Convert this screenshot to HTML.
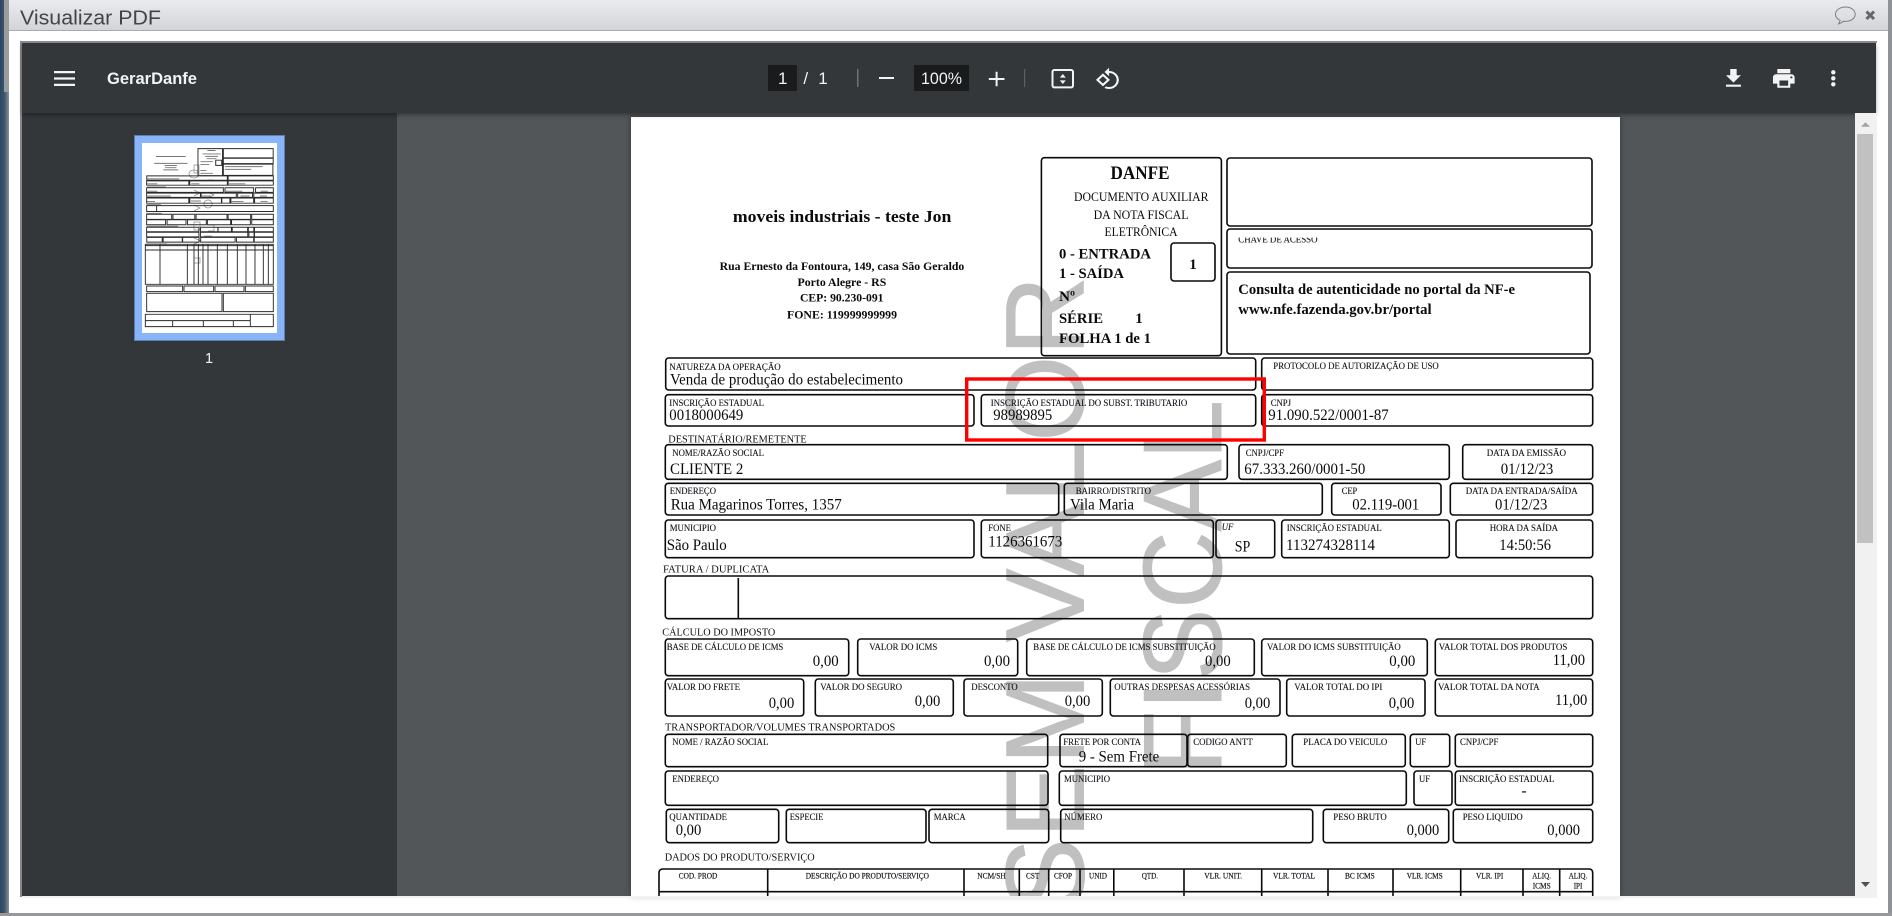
<!DOCTYPE html>
<html lang="pt-BR"><head><meta charset="utf-8"><title>Visualizar PDF</title>
<style>
html,body{margin:0;padding:0;width:1892px;height:916px;overflow:hidden;background:#fff}
.a{position:absolute}
svg{position:absolute;left:0;top:0}
#pg text{font-family:"Liberation Serif",serif;fill:#0a0a0a;white-space:pre}
#pg .l{font-size:9.2px;fill:#14141c;stroke:#14141c;stroke-width:.12px}
#pg .h{font-size:8.4px;fill:#14141c;stroke:#14141c;stroke-width:.2px}
#pg .s{font-size:10.8px;fill:#111}
#pg .v{font-size:16px}
#pg .m{font-size:13px}
#pg .b{font-weight:bold}
#pg .w{font-family:"Liberation Sans",sans-serif;font-size:111px;fill:#c0c0c0;stroke:#c0c0c0;stroke-width:1px}
#pg .box rect{fill:none;stroke:#0a0a0a;stroke-width:1.6px}
.ui{font-family:"Liberation Sans",sans-serif;fill:#f1f3f4}
</style></head>
<body>
<!-- window chrome -->
<div class="a" style="left:0;top:0;width:9px;height:916px;background:linear-gradient(90deg,#2c4763,#3f566e 50%,#8a9199)"></div>
<div class="a" style="left:4px;top:0;width:5px;height:92px;background:#9a9c9e"></div>
<div class="a" style="left:9px;top:0;width:1879px;height:913px;background:#fff"></div>
<div class="a" style="left:1888px;top:0;width:4px;height:916px;background:#8f9296"></div>
<div class="a" style="left:0;top:913px;width:1892px;height:3px;background:#96989a"></div>
<div class="a" style="left:9px;top:0;width:1879px;height:30px;background:linear-gradient(#e9ebee,#d2d4d8);border-bottom:1px solid #a8acb1"></div>
<!-- viewer frame -->
<div class="a" style="left:20px;top:41px;width:1857px;height:2px;background:#8c8e90"></div>
<div class="a" style="left:20px;top:41px;width:2px;height:856px;background:#85878a"></div>
<div class="a" style="left:22px;top:113px;width:375px;height:783px;background:#33373a"></div>
<div class="a" style="left:397px;top:113px;width:1458px;height:783px;background:#525659"></div>
<div class="a" style="left:631px;top:117px;width:989px;height:779px;background:#fff;box-shadow:0 0 6px rgba(0,0,0,.35)"></div>
<div class="a" style="left:22px;top:43px;width:1854px;height:70px;background:#33373a;box-shadow:0 2px 4px rgba(0,0,0,.35)"></div>
<div class="a" style="left:1855px;top:113px;width:22px;height:785px;background:#f1f1f1"></div>
<div class="a" style="left:1856.5px;top:134px;width:16.5px;height:409px;background:#c1c1c1"></div>
<div class="a" style="left:22px;top:896px;width:1855px;height:2px;background:#f2f2f2"></div>
<div class="a" style="left:767.8px;top:65px;width:29.2px;height:26px;background:#191b1c"></div>
<div class="a" style="left:914px;top:65px;width:55px;height:26px;background:#191b1c"></div>
<div class="a" style="left:134px;top:135px;width:151px;height:206px;background:#8ab4f8;outline:1px solid #5c7fb3;outline-offset:-1px"></div>
<div class="a" style="left:142px;top:143px;width:135px;height:190px;background:#fff"></div>

<svg width="1892" height="916" viewBox="0 0 1892 916" xmlns="http://www.w3.org/2000/svg">
<defs><clipPath id="c"><rect x="631" y="117" width="989" height="779"/></clipPath></defs>

<!-- title bar -->
<text x="20" y="24.5" textLength="141" lengthAdjust="spacingAndGlyphs" style="font-family:'Liberation Sans',sans-serif;font-size:20px;fill:#444">Visualizar PDF</text>
<path d="M1845.5 7c-5.5 0-10 3.2-10 7.2 0 2.6 1.8 4.8 4.6 6.1-.2 1.3-.7 2.5-1.5 3.6 2-.5 3.6-1.5 4.7-2.7.7.1 1.4.2 2.2.2 5.5 0 9.7-3.2 9.7-7.2S1851 7 1845.5 7z" fill="none" stroke="#7b7e82" stroke-width="1"/>
<path d="M1866.5 11.5l7.5 7.5m0-7.5l-7.5 7.5" fill="none" stroke="#666" stroke-width="3"/>

<!-- toolbar -->
<path d="M54 71h21v2.2H54zM54 77.4h21v2.2H54zM54 83.8h21V86H54z" fill="#f1f3f4"/>
<text class="ui" x="107" y="84" font-size="17" font-weight="bold" textLength="90" lengthAdjust="spacingAndGlyphs">GerarDanfe</text>
<text class="ui" x="782.7" y="84" font-size="17" text-anchor="middle">1</text>
<text class="ui" x="805.7" y="84" font-size="17" text-anchor="middle">/</text>
<text class="ui" x="823" y="84" font-size="17" text-anchor="middle">1</text>
<rect x="857" y="69" width="1.5" height="18" fill="#6f7275"/>
<rect x="879" y="77" width="15" height="2" fill="#f1f3f4"/>
<text class="ui" x="921" y="84" font-size="17" textLength="41" lengthAdjust="spacingAndGlyphs">100%</text>
<path d="M988.8 78h15.7v2h-15.7zM995.6 71.7h2v14.6h-2z" fill="#f1f3f4"/>
<rect x="1024" y="69" width="1.2" height="18" fill="#5d6063"/>
<rect x="1052.5" y="70" width="20.5" height="17.4" rx="1.8" fill="none" stroke="#f1f3f4" stroke-width="2"/>
<path d="M1062.8 74l-3 3.6h6zM1062.8 84l-3-3.6h6z" fill="#f1f3f4"/>
<svg x="1095" y="67" width="26" height="24" viewBox="0 0 24 24" preserveAspectRatio="none"><path fill="#f1f3f4" d="M7.34 6.41L.86 12.9l6.49 6.48 6.49-6.48-6.5-6.49zM3.69 12.9l3.66-3.66L11 12.9l-3.66 3.66-3.65-3.66zm15.67-6.26C17.61 4.88 15.3 4 13 4V.76L8.76 5 13 9.24V6c1.79 0 3.58.68 4.95 2.05 2.73 2.73 2.73 7.17 0 9.9C16.58 19.32 14.79 20 13 20c-.97 0-1.94-.21-2.84-.61l-1.49 1.49C10.02 21.62 11.51 22 13 22c2.3 0 4.61-.88 6.36-2.64 3.52-3.51 3.52-9.21 0-12.72z"/></svg>
<svg x="1720.6" y="65.9" width="25.7" height="25" viewBox="0 0 24 24" preserveAspectRatio="none"><path fill="#f1f3f4" d="M19 9h-4V3H9v6H5l7 7 7-7zM5 18v2h14v-2H5z"/></svg>
<svg x="1770.8" y="65.9" width="26" height="25" viewBox="0 0 24 24" preserveAspectRatio="none"><path fill="#f1f3f4" d="M19 8H5c-1.66 0-3 1.34-3 3v6h4v4h12v-4h4v-6c0-1.66-1.34-3-3-3zm-3 11H8v-5h8v5zm3-7c-.55 0-1-.45-1-1s.45-1 1-1 1 .45 1 1-.45 1-1 1zm-1-9H6v4h12V3z"/></svg>
<circle cx="1833.3" cy="72.3" r="2.2" fill="#f1f3f4"/><circle cx="1833.3" cy="78.3" r="2.2" fill="#f1f3f4"/><circle cx="1833.3" cy="84.3" r="2.2" fill="#f1f3f4"/>

<!-- scrollbar arrows -->
<path d="M1861 126.7h9l-4.5-4.5z" fill="#a3a3a3"/>
<path d="M1861 882h9l-4.5 5z" fill="#505050"/>

<!-- thumbnail -->
<text class="ui" x="209" y="363" font-size="14.5" text-anchor="middle">1</text>
<g fill="none" stroke="#8a8a8a" stroke-width=".7"><path d="M194 165h5v8h-5zM194 178a5 4 0 1 1 .1 0zM194 190l6 3-6 3M194 205l6 3-6 3M194 222h6v8h-6zM194 238l7 3-7 3M208 180h6M208 192l6 3-6 3M208 208a4 4 0 1 1 .1 0M208 225h6v6h-6M194 258h6v5h-6M204 236h8"/></g>
<g fill="none" stroke="#777" stroke-width="7" transform="translate(142 143) scale(.1365) translate(-631 -117)">
<path d="M733 216H951M720 266H964M797 282H886M800 298H883M787 314H897M1110 172H1170M1074 197H1208M1094 215H1188M1105 232H1177M1059 254H1151M1059 274H1124M1059 319H1103M1059 339H1151M1238 290H1515M1238 310H1431M670 380H903M669 416H743M993 416H1052M1268 416H1388M670 470H743M1244 470H1365M1500 470H1553M670 505H842M1070 505H1134M1352 505H1419M1495 505H1547M667 546H727M988 542H1062M1286 546H1375M1499 546H1551M668 439H806M663 569H769M662 632H775M665 727H895M664 857H815"/>
</g>
<g fill="none" stroke="#2a2a2a" stroke-width="7" transform="translate(142 143) scale(.1365) translate(-631 -117)">
<path d="M1041 158H1221V356H1041ZM1227 158H1592V226H1227ZM1227 229H1592V268H1227ZM1227 272H1590V354H1227ZM1171 243H1215V281H1171ZM666 358H1256V390H666ZM1262 358H1593V390H1262ZM665 395H974V426H665ZM981 395H1256V426H981ZM1262 395H1593V426H1262ZM665 445H1227V479H665ZM1239 445H1449V479H1239ZM1463 445H1593V479H1463ZM665 484H1059V515H665ZM1064 484H1322V515H1064ZM1332 484H1441V515H1332ZM1450 484H1593V515H1450ZM665 520H974V558H665ZM981 520H1213V558H981ZM1216 520H1275V558H1216ZM1282 520H1449V558H1282ZM1456 520H1593V558H1456ZM665 576H1593V619H665ZM738 576V619M665 639H849V676H665ZM858 639H1018V676H858ZM1027 639H1254V676H1027ZM1262 639H1427V676H1262ZM1435 639H1593V676H1435ZM665 679H804V716H665ZM815 679H953V716H815ZM964 679H1102V716H964ZM1110 679H1280V716H1110ZM1287 679H1425V716H1287ZM1435 679H1593V716H1435ZM665 734H1048V767H665ZM1060 734H1187V767H1060ZM1188 734H1286V767H1188ZM1292 734H1405V767H1292ZM1410 734H1450V767H1410ZM1455 734H1593V767H1455ZM665 771H1048V805H665ZM1059 771H1406V805H1059ZM1414 771H1452V805H1414ZM1455 771H1593V805H1455ZM666 809H779V843H666ZM786 809H926V843H786ZM929 809H1049V843H929ZM1061 809H1313V843H1061ZM1323 809H1449V843H1323ZM1453 809H1593V843H1453Z"/>
</g>
<g fill="none" stroke="#2a2a2a" stroke-width="2.8" transform="translate(120 120) scale(.3333)">
<path d="M76 373H460V493H76ZM76 377H460M76 390H460M120 373V493M202 373V493M222 373V493M235 373V493M249 373V493M264 373V493M292 373V493M322 373V493M352 373V493M378 373V493M405 373V493M430 373V493M445 373V493"/>
<path d="M80 498H188V515H80ZM192 498H281V515H192ZM285 498H372V515H285ZM376 498H460V515H376ZM80 520H306V575H80ZM310 520H460V575H310ZM76 583H460V620H76ZM391 583V620M76 602H391M158 602V620M250 602V620M340 602V620"/>
</g>

<!-- PDF page -->
<g id="pg" clip-path="url(#c)">
<!-- watermark -->
<text class="w" transform="translate(1083.5 912) rotate(-90)" textLength="636" lengthAdjust="spacingAndGlyphs">SEM VALOR</text>
<text class="w" transform="translate(1221 776) rotate(-90)" textLength="376" lengthAdjust="spacingAndGlyphs">FISCAL</text>

<g class="box">
<rect x="1041.4" y="157.7" width="180" height="198" rx="3"/>
<rect x="1227" y="158" width="365" height="68" rx="3"/>
<rect x="1227" y="229" width="365" height="39" rx="3"/>
<rect x="1227" y="272" width="363" height="82" rx="3"/>
<rect x="1171" y="243" width="44" height="38" rx="3"/>
<rect x="665.7" y="358" width="590" height="32" rx="3"/>
<rect x="1261.7" y="358" width="331" height="32" rx="3"/>
<rect x="665.3" y="394.7" width="308.7" height="31.3" rx="3"/>
<rect x="981.3" y="394.7" width="274.4" height="31.3" rx="3"/>
<rect x="1261.7" y="394.7" width="331" height="31.3" rx="3"/>
<rect x="665.3" y="444.7" width="562" height="34.6" rx="3"/>
<rect x="1239" y="444.7" width="210.3" height="34.6" rx="3"/>
<rect x="1462.7" y="444.7" width="130" height="34.6" rx="3"/>
<rect x="665.3" y="483.3" width="393.4" height="31.7" rx="3"/>
<rect x="1064.3" y="483.3" width="258" height="31.7" rx="3"/>
<rect x="1331.7" y="483.3" width="109.3" height="31.7" rx="3"/>
<rect x="1450.3" y="483.3" width="142.4" height="31.7" rx="3"/>
<rect x="665.3" y="520" width="308.7" height="37.7" rx="3"/>
<rect x="981.3" y="520" width="232" height="37.7" rx="3"/>
<rect x="1216" y="520" width="58.7" height="37.7" rx="3"/>
<rect x="1281.7" y="520" width="167.6" height="37.7" rx="3"/>
<rect x="1456" y="520" width="136.7" height="37.7" rx="3"/>
<rect x="665.3" y="576" width="927.4" height="42.7" rx="3"/>
<rect x="665.3" y="639" width="183.4" height="36.7" rx="3"/>
<rect x="857.7" y="639" width="160" height="36.7" rx="3"/>
<rect x="1026.7" y="639" width="227.6" height="36.7" rx="3"/>
<rect x="1261.7" y="639" width="165.6" height="36.7" rx="3"/>
<rect x="1435.3" y="639" width="157.4" height="36.7" rx="3"/>
<rect x="665.3" y="679" width="138.4" height="37" rx="3"/>
<rect x="815.3" y="679" width="138" height="37" rx="3"/>
<rect x="964" y="679" width="138.3" height="37" rx="3"/>
<rect x="1110.3" y="679" width="169.7" height="37" rx="3"/>
<rect x="1286.7" y="679" width="138.3" height="37" rx="3"/>
<rect x="1435.3" y="679" width="157.4" height="37" rx="3"/>
<rect x="665.3" y="734.3" width="382.4" height="32.4" rx="3"/>
<rect x="1060" y="734.3" width="127" height="32.4" rx="3"/>
<rect x="1187.7" y="734.3" width="98.6" height="32.4" rx="3"/>
<rect x="1292.3" y="734.3" width="113" height="32.4" rx="3"/>
<rect x="1410.3" y="734.3" width="39.4" height="32.4" rx="3"/>
<rect x="1455.3" y="734.3" width="137.4" height="32.4" rx="3"/>
<rect x="665.3" y="771" width="382.7" height="34.3" rx="3"/>
<rect x="1059.3" y="771" width="347" height="34.3" rx="3"/>
<rect x="1414" y="771" width="38" height="34.3" rx="3"/>
<rect x="1455.3" y="771" width="137.4" height="34.3" rx="3"/>
<rect x="666.3" y="809.3" width="112.4" height="33.4" rx="3"/>
<rect x="786.3" y="809.3" width="139.7" height="33.4" rx="3"/>
<rect x="929" y="809.3" width="119.7" height="33.4" rx="3"/>
<rect x="1060.7" y="809.3" width="252" height="33.4" rx="3"/>
<rect x="1323.3" y="809.3" width="125.4" height="33.4" rx="3"/>
<rect x="1453.3" y="809.3" width="139.4" height="33.4" rx="3"/>
</g>
<path d="M738.3 578V618" fill="none" stroke="#0a0a0a" stroke-width="1.6"/>
<path d="M659 900V873q0-4 4-4H1589q3.7 0 3.7 4V900M659 891.7H1592.7M767.7 869V900M964 869V900M1019.3 869V900M1048.7 869V900M1080 869V900M1113.8 869V900M1184 869V900M1261.7 869V900M1328 869V900M1393 869V900M1460.7 869V900M1523 869V900M1559.7 869V900" fill="none" stroke="#0a0a0a" stroke-width="1.6"/>

<!-- header -->
<text class="b" x="732.9" y="222" font-size="16.7" textLength="218.5" lengthAdjust="spacingAndGlyphs">moveis industriais - teste Jon</text>
<text class="b" x="719.6" y="270" font-size="12" textLength="244.7" lengthAdjust="spacingAndGlyphs">Rua Ernesto da Fontoura, 149, casa São Geraldo</text>
<text class="b" x="797.5" y="286" font-size="12" textLength="88.8" lengthAdjust="spacingAndGlyphs">Porto Alegre - RS</text>
<text class="b" x="800" y="301.7" font-size="12" textLength="83.5" lengthAdjust="spacingAndGlyphs">CEP: 90.230-091</text>
<text class="b" x="787" y="318.7" font-size="12" textLength="110" lengthAdjust="spacingAndGlyphs">FONE: 119999999999</text>
<text class="b" x="1110.5" y="179" font-size="19" textLength="59" lengthAdjust="spacingAndGlyphs">DANFE</text>
<text class="m" x="1074" y="201" textLength="134.5" lengthAdjust="spacingAndGlyphs">DOCUMENTO AUXILIAR</text>
<text class="m" x="1093.6" y="219" textLength="94.9" lengthAdjust="spacingAndGlyphs">DA NOTA FISCAL</text>
<text class="m" x="1104.5" y="236" textLength="73.1" lengthAdjust="spacingAndGlyphs">ELETRÔNICA</text>
<text class="b" x="1059" y="258.5" font-size="15" textLength="92" lengthAdjust="spacingAndGlyphs">0 - ENTRADA</text>
<text class="b" x="1059" y="278" font-size="15" textLength="65" lengthAdjust="spacingAndGlyphs">1 - SAÍDA</text>
<text class="b" x="1193" y="269" font-size="15" text-anchor="middle">1</text>
<text class="b" x="1059" y="301" font-size="15" textLength="16" lengthAdjust="spacingAndGlyphs">Nº</text>
<text class="b" x="1059" y="323" font-size="15" textLength="44" lengthAdjust="spacingAndGlyphs">SÉRIE</text>
<text class="b" x="1139" y="323" font-size="15" text-anchor="middle">1</text>
<text class="b" x="1059" y="343" font-size="15" textLength="92" lengthAdjust="spacingAndGlyphs">FOLHA 1 de 1</text>
<text class="l" x="1238.3" y="242.7" textLength="79.2" lengthAdjust="spacingAndGlyphs">CHAVE DE ACESSO</text>
<rect x="1236" y="234" width="84" height="3.6" fill="#fff"/>
<text class="b" x="1238.3" y="294" font-size="14.5" textLength="276.7" lengthAdjust="spacingAndGlyphs">Consulta de autenticidade no portal da NF-e</text>
<text class="b" x="1238.3" y="314" font-size="14.5" textLength="193.3" lengthAdjust="spacingAndGlyphs">www.nfe.fazenda.gov.br/portal</text>

<!-- natureza -->
<text class="l" x="669.3" y="370" textLength="111.4" lengthAdjust="spacingAndGlyphs">NATUREZA DA OPERAÇÃO</text>
<text class="v" x="670" y="384.3" textLength="233" lengthAdjust="spacingAndGlyphs">Venda de produção do estabelecimento</text>
<text class="l" x="1273.3" y="369" textLength="165.4" lengthAdjust="spacingAndGlyphs">PROTOCOLO DE AUTORIZAÇÃO DE USO</text>
<text class="l" x="669.3" y="406" textLength="94.7" lengthAdjust="spacingAndGlyphs">INSCRIÇÃO ESTADUAL</text>
<text class="v" x="669.3" y="420" textLength="74" lengthAdjust="spacingAndGlyphs">0018000649</text>
<text class="l" x="990.7" y="406" textLength="196.6" lengthAdjust="spacingAndGlyphs">INSCRIÇÃO ESTADUAL DO SUBST. TRIBUTARIO</text>
<text class="v" x="993.3" y="420" textLength="59" lengthAdjust="spacingAndGlyphs">98989895</text>
<text class="l" x="1270.7" y="406" textLength="20.3" lengthAdjust="spacingAndGlyphs">CNPJ</text>
<text class="v" x="1268.3" y="420" textLength="120.4" lengthAdjust="spacingAndGlyphs">91.090.522/0001-87</text>

<!-- destinatario -->
<text class="s" x="668.3" y="442.7" textLength="138.4" lengthAdjust="spacingAndGlyphs">DESTINATÁRIO/REMETENTE</text>
<text class="l" x="672.3" y="456" textLength="91.7" lengthAdjust="spacingAndGlyphs">NOME/RAZÃO SOCIAL</text>
<text class="v" x="670" y="474" textLength="73.3" lengthAdjust="spacingAndGlyphs">CLIENTE 2</text>
<text class="l" x="1245.7" y="456" textLength="38.3" lengthAdjust="spacingAndGlyphs">CNPJ/CPF</text>
<text class="v" x="1244.3" y="474" textLength="121" lengthAdjust="spacingAndGlyphs">67.333.260/0001-50</text>
<text class="l" x="1486.7" y="456" textLength="79.3" lengthAdjust="spacingAndGlyphs">DATA DA EMISSÃO</text>
<text class="v" x="1500.7" y="474" textLength="52.6" lengthAdjust="spacingAndGlyphs">01/12/23</text>
<text class="l" x="669.7" y="494" textLength="46.3" lengthAdjust="spacingAndGlyphs">ENDEREÇO</text>
<text class="v" x="670.7" y="509.3" textLength="171" lengthAdjust="spacingAndGlyphs">Rua Magarinos Torres, 1357</text>
<text class="l" x="1075.7" y="494" textLength="75.3" lengthAdjust="spacingAndGlyphs">BAIRRO/DISTRITO</text>
<text class="v" x="1070" y="509.3" textLength="64" lengthAdjust="spacingAndGlyphs">Vila Maria</text>
<text class="l" x="1341.7" y="494" textLength="15.6" lengthAdjust="spacingAndGlyphs">CEP</text>
<text class="v" x="1352.3" y="509.3" textLength="67" lengthAdjust="spacingAndGlyphs">02.119-001</text>
<text class="l" x="1465.7" y="494" textLength="112" lengthAdjust="spacingAndGlyphs">DATA DA ENTRADA/SAÍDA</text>
<text class="v" x="1495" y="509.3" textLength="52.3" lengthAdjust="spacingAndGlyphs">01/12/23</text>
<text class="l" x="669.7" y="531" textLength="46.3" lengthAdjust="spacingAndGlyphs">MUNICIPIO</text>
<text class="v" x="666.7" y="550" textLength="60" lengthAdjust="spacingAndGlyphs">São Paulo</text>
<text class="l" x="988.3" y="531" textLength="22.7" lengthAdjust="spacingAndGlyphs">FONE</text>
<text class="v" x="988.3" y="546.7" textLength="74" lengthAdjust="spacingAndGlyphs">1126361673</text>
<text class="l" x="1221.7" y="530" font-style="italic" textLength="11.6" lengthAdjust="spacingAndGlyphs">UF</text>
<text class="v" x="1234.7" y="551.7" textLength="15.6" lengthAdjust="spacingAndGlyphs">SP</text>
<text class="l" x="1286.7" y="531" textLength="95" lengthAdjust="spacingAndGlyphs">INSCRIÇÃO ESTADUAL</text>
<text class="v" x="1286" y="550" textLength="89" lengthAdjust="spacingAndGlyphs">113274328114</text>
<text class="l" x="1489.7" y="531" textLength="68.3" lengthAdjust="spacingAndGlyphs">HORA DA SAÍDA</text>
<text class="v" x="1499.3" y="550" textLength="51.7" lengthAdjust="spacingAndGlyphs">14:50:56</text>

<text class="s" x="663" y="572.7" textLength="106.3" lengthAdjust="spacingAndGlyphs">FATURA / DUPLICATA</text>
<text class="s" x="662.3" y="635.7" textLength="113" lengthAdjust="spacingAndGlyphs">CÁLCULO DO IMPOSTO</text>

<!-- imposto -->
<text class="l" x="666.7" y="650" textLength="116.6" lengthAdjust="spacingAndGlyphs">BASE DE CÁLCULO DE ICMS</text>
<text class="v" x="812.7" y="666" textLength="26" lengthAdjust="spacingAndGlyphs">0,00</text>
<text class="l" x="869.3" y="650" textLength="68" lengthAdjust="spacingAndGlyphs">VALOR DO ICMS</text>
<text class="v" x="984" y="666" textLength="26" lengthAdjust="spacingAndGlyphs">0,00</text>
<text class="l" x="1033.3" y="650" textLength="182.4" lengthAdjust="spacingAndGlyphs">BASE DE CÁLCULO DE ICMS SUBSTITUIÇÃO</text>
<text class="v" x="1205" y="666" textLength="25.7" lengthAdjust="spacingAndGlyphs">0,00</text>
<text class="l" x="1267" y="650" textLength="133.7" lengthAdjust="spacingAndGlyphs">VALOR DO ICMS SUBSTITUIÇÃO</text>
<text class="v" x="1389.3" y="666" textLength="26" lengthAdjust="spacingAndGlyphs">0,00</text>
<text class="l" x="1438.7" y="650" textLength="128.6" lengthAdjust="spacingAndGlyphs">VALOR TOTAL DOS PRODUTOS</text>
<text class="v" x="1552.7" y="665" textLength="32.3" lengthAdjust="spacingAndGlyphs">11,00</text>
<text class="l" x="666.7" y="690" textLength="73.3" lengthAdjust="spacingAndGlyphs">VALOR DO FRETE</text>
<text class="v" x="768.7" y="708" textLength="25.6" lengthAdjust="spacingAndGlyphs">0,00</text>
<text class="l" x="820.3" y="690" textLength="81.7" lengthAdjust="spacingAndGlyphs">VALOR DO SEGURO</text>
<text class="v" x="914.7" y="706" textLength="25.6" lengthAdjust="spacingAndGlyphs">0,00</text>
<text class="l" x="971.3" y="690" textLength="46.4" lengthAdjust="spacingAndGlyphs">DESCONTO</text>
<text class="v" x="1064.7" y="706" textLength="25.6" lengthAdjust="spacingAndGlyphs">0,00</text>
<text class="l" x="1114.3" y="690" textLength="135.7" lengthAdjust="spacingAndGlyphs">OUTRAS DESPESAS ACESSÓRIAS</text>
<text class="v" x="1244.7" y="708" textLength="25.6" lengthAdjust="spacingAndGlyphs">0,00</text>
<text class="l" x="1294.3" y="690" textLength="88" lengthAdjust="spacingAndGlyphs">VALOR TOTAL DO IPI</text>
<text class="v" x="1388.7" y="708" textLength="25.6" lengthAdjust="spacingAndGlyphs">0,00</text>
<text class="l" x="1438" y="690" textLength="101.7" lengthAdjust="spacingAndGlyphs">VALOR TOTAL DA NOTA</text>
<text class="v" x="1555" y="705" textLength="32.3" lengthAdjust="spacingAndGlyphs">11,00</text>

<!-- transportador -->
<text class="s" x="665" y="730.7" textLength="230.3" lengthAdjust="spacingAndGlyphs">TRANSPORTADOR/VOLUMES TRANSPORTADOS</text>
<text class="l" x="672.3" y="745" textLength="96" lengthAdjust="spacingAndGlyphs">NOME / RAZÃO SOCIAL</text>
<text class="l" x="1063.3" y="745" textLength="77.7" lengthAdjust="spacingAndGlyphs">FRETE POR CONTA</text>
<text class="v" x="1078.7" y="761.7" textLength="80.6" lengthAdjust="spacingAndGlyphs">9 - Sem Frete</text>
<text class="l" x="1193.3" y="745" textLength="59.4" lengthAdjust="spacingAndGlyphs">CODIGO ANTT</text>
<text class="l" x="1303.3" y="745" textLength="84" lengthAdjust="spacingAndGlyphs">PLACA DO VEICULO</text>
<text class="l" x="1415.3" y="745" textLength="10.7" lengthAdjust="spacingAndGlyphs">UF</text>
<text class="l" x="1460" y="745" textLength="38.3" lengthAdjust="spacingAndGlyphs">CNPJ/CPF</text>
<text class="l" x="672.3" y="782" textLength="46.7" lengthAdjust="spacingAndGlyphs">ENDEREÇO</text>
<text class="l" x="1064" y="782" textLength="46" lengthAdjust="spacingAndGlyphs">MUNICIPIO</text>
<text class="l" x="1419" y="782" textLength="11" lengthAdjust="spacingAndGlyphs">UF</text>
<text class="l" x="1459" y="782" textLength="95.3" lengthAdjust="spacingAndGlyphs">INSCRIÇÃO ESTADUAL</text>
<text class="v" x="1524" y="795.7" text-anchor="middle">-</text>
<text class="l" x="669.3" y="820" textLength="57.7" lengthAdjust="spacingAndGlyphs">QUANTIDADE</text>
<text class="v" x="675.7" y="835" textLength="25.6" lengthAdjust="spacingAndGlyphs">0,00</text>
<text class="l" x="789.7" y="820" textLength="33.6" lengthAdjust="spacingAndGlyphs">ESPECIE</text>
<text class="l" x="933.7" y="820" textLength="32" lengthAdjust="spacingAndGlyphs">MARCA</text>
<text class="l" x="1064.3" y="820" textLength="38" lengthAdjust="spacingAndGlyphs">NÚMERO</text>
<text class="l" x="1333.3" y="820" textLength="53.4" lengthAdjust="spacingAndGlyphs">PESO BRUTO</text>
<text class="v" x="1406.7" y="835" textLength="32.6" lengthAdjust="spacingAndGlyphs">0,000</text>
<text class="l" x="1462.7" y="820" textLength="60" lengthAdjust="spacingAndGlyphs">PESO LIQUIDO</text>
<text class="v" x="1547.3" y="835" textLength="32.7" lengthAdjust="spacingAndGlyphs">0,000</text>

<!-- produtos -->
<text class="s" x="664.7" y="860.7" textLength="150" lengthAdjust="spacingAndGlyphs">DADOS DO PRODUTO/SERVIÇO</text>
<text class="h" x="678.7" y="878.3" textLength="38.6" lengthAdjust="spacingAndGlyphs">COD. PROD</text>
<text class="h" x="805.7" y="878.3" textLength="123.3" lengthAdjust="spacingAndGlyphs">DESCRIÇÃO DO PRODUTO/SERVIÇO</text>
<text class="h" x="977.3" y="878.3" textLength="28.4" lengthAdjust="spacingAndGlyphs">NCM/SH</text>
<text class="h" x="1026" y="878.3" textLength="13.3" lengthAdjust="spacingAndGlyphs">CST</text>
<text class="h" x="1054" y="878.3" textLength="18" lengthAdjust="spacingAndGlyphs">CFOP</text>
<text class="h" x="1089" y="878.3" textLength="18" lengthAdjust="spacingAndGlyphs">UNID</text>
<text class="h" x="1141.7" y="878.3" textLength="16.3" lengthAdjust="spacingAndGlyphs">QTD.</text>
<text class="h" x="1204.3" y="878.3" textLength="37.7" lengthAdjust="spacingAndGlyphs">VLR. UNIT.</text>
<text class="h" x="1273" y="878.3" textLength="42" lengthAdjust="spacingAndGlyphs">VLR. TOTAL</text>
<text class="h" x="1345" y="878.3" textLength="29.7" lengthAdjust="spacingAndGlyphs">BC ICMS</text>
<text class="h" x="1406.7" y="878.3" textLength="36" lengthAdjust="spacingAndGlyphs">VLR. ICMS</text>
<text class="h" x="1476" y="878.3" textLength="27.3" lengthAdjust="spacingAndGlyphs">VLR. IPI</text>
<text class="h" x="1532.3" y="878.3" textLength="18.7" lengthAdjust="spacingAndGlyphs">ALIQ.</text>
<text class="h" x="1532.7" y="888.3" textLength="18" lengthAdjust="spacingAndGlyphs">ICMS</text>
<text class="h" x="1568.7" y="878.3" textLength="18.6" lengthAdjust="spacingAndGlyphs">ALIQ.</text>
<text class="h" x="1573.7" y="888.3" textLength="8.6" lengthAdjust="spacingAndGlyphs">IPI</text>
</g>
<!-- red annotation -->
<rect x="966.7" y="379" width="297.6" height="61" fill="none" stroke="#f00" stroke-width="3.4"/>
</svg>
</body></html>
